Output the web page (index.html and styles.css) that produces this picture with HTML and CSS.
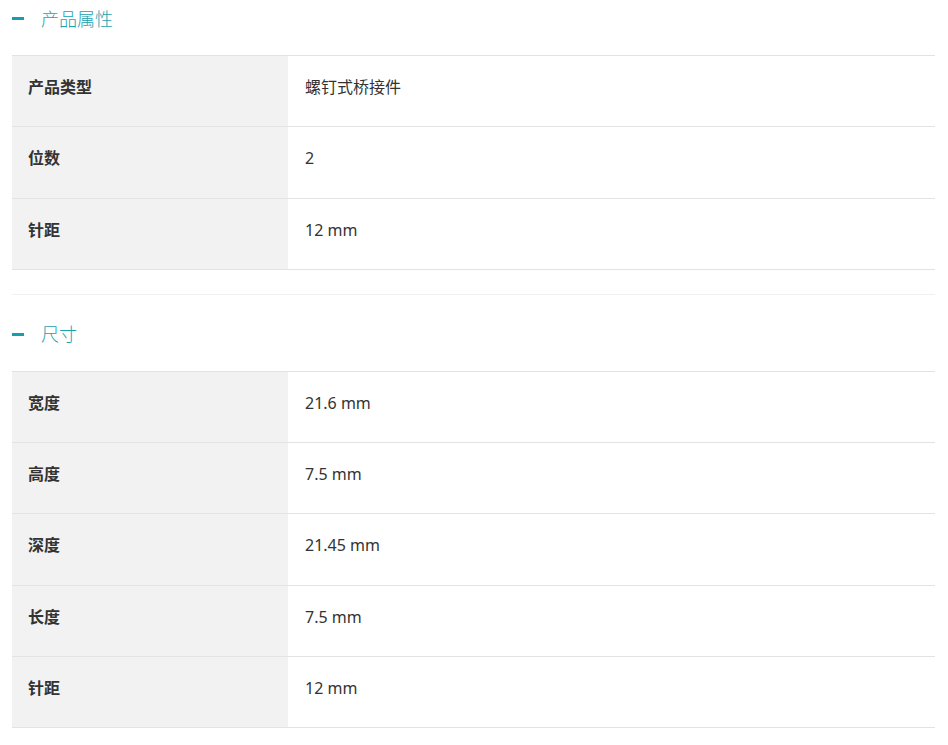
FILE: index.html
```html
<!DOCTYPE html>
<html lang="zh">
<head>
<meta charset="utf-8">
<link rel="stylesheet" href="styles.css">
</head>
<body>
<div class="page">
  <section class="section">
    <div class="section-header"><span class="dash"></span><span class="title">产品属性</span></div>
    <div class="table">
      <div class="row"><div class="label">产品类型</div><div class="value">螺钉式桥接件</div></div>
      <div class="row"><div class="label">位数</div><div class="value">2</div></div>
      <div class="row"><div class="label">针距</div><div class="value">12 mm</div></div>
    </div>
  </section>
  <section class="section second">
    <div class="section-header"><span class="dash"></span><span class="title">尺寸</span></div>
    <div class="table">
      <div class="row"><div class="label">宽度</div><div class="value">21.6 mm</div></div>
      <div class="row"><div class="label">高度</div><div class="value">7.5 mm</div></div>
      <div class="row"><div class="label">深度</div><div class="value">21.45 mm</div></div>
      <div class="row"><div class="label">长度</div><div class="value">7.5 mm</div></div>
      <div class="row"><div class="label">针距</div><div class="value">12 mm</div></div>
    </div>
  </section>
</div>
</body>
</html>
```
FILE: styles.css
```css
html, body {
  margin: 0;
  padding: 0;
  background: #ffffff;
}
body {
  font-family: "Noto Sans", "Noto Sans CJK SC", sans-serif;
  color: #333333;
}
.page {
  width: 923px;
  padding: 0 13px 0 12px;
}
.section.second {
  margin-top: 24px;
  border-top: 1px solid #f0f0f0;
  padding-top: 21px;
}
.section-header {
  display: flex;
  align-items: center;
  height: 37px;
  margin-bottom: 18px;
}
.dash {
  width: 12px;
  height: 3px;
  background: #139fad;
  margin-right: 17px;
}
.title {
  font-size: 18px;
  color: #18a2b0;
  font-weight: 300;
  line-height: 24px;
}
.table {
  border-top: 1px solid #e3e3e3;
}
.row {
  display: flex;
  height: 70.25px;
  border-bottom: 1px solid #e3e3e3;
}
.label {
  width: 260px;
  flex: none;
  background: #f2f2f2;
  padding: 19px 0 0 16px;
  font-size: 16px;
  font-weight: 700;
  line-height: 24px;
  color: #333333;
}
.value {
  flex: 1;
  padding: 19px 0 0 17px;
  font-size: 16px;
  line-height: 24px;
  color: #333333;
}
```
